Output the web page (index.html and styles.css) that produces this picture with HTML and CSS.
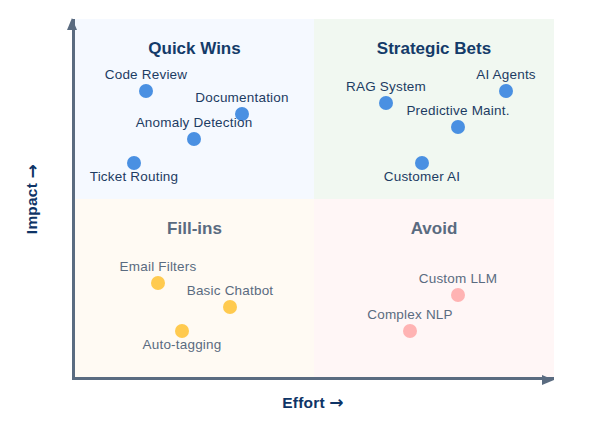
FILE: index.html
```html
<!DOCTYPE html>
<html lang="en">
<head>
<meta charset="utf-8">
<title>Effort / Impact Matrix</title>
<link rel="stylesheet" href="styles.css">
</head>
<body>
<div class="figure">
  <div class="y-label-col"><span class="axis-label y-label">Impact <span class="arrow">→</span></span></div>
  <div class="plot">
    <div class="quadrant q-wins"><h2 class="q-title">Quick Wins</h2></div>
    <div class="quadrant q-bets"><h2 class="q-title">Strategic Bets</h2></div>
    <div class="quadrant q-fill"><h2 class="q-title">Fill-ins</h2></div>
    <div class="quadrant q-avoid"><h2 class="q-title">Avoid</h2></div>

    <div class="point hi above" style="left:71px;top:72px"><span class="label">Code Review</span></div>
    <div class="point hi above" style="left:167px;top:95px"><span class="label">Documentation</span></div>
    <div class="point hi above" style="left:119px;top:120px"><span class="label">Anomaly Detection</span></div>
    <div class="point hi below" style="left:59px;top:144px"><span class="label">Ticket Routing</span></div>

    <div class="point hi above" style="left:311px;top:84px"><span class="label">RAG System</span></div>
    <div class="point hi above" style="left:431px;top:72px"><span class="label">AI Agents</span></div>
    <div class="point hi above" style="left:383px;top:108px"><span class="label">Predictive Maint.</span></div>
    <div class="point hi below" style="left:347px;top:144px"><span class="label">Customer AI</span></div>

    <div class="point fill above" style="left:83px;top:264px"><span class="label">Email Filters</span></div>
    <div class="point fill above" style="left:155px;top:288px"><span class="label">Basic Chatbot</span></div>
    <div class="point fill below" style="left:107px;top:312px"><span class="label">Auto-tagging</span></div>

    <div class="point avoid above" style="left:383px;top:276px"><span class="label">Custom LLM</span></div>
    <div class="point avoid above" style="left:335px;top:312px"><span class="label">Complex NLP</span></div>
  </div>
  <div class="x-label-row"><span class="axis-label">Effort <span class="arrow">→</span></span></div>
</div>
</body>
</html>
```
FILE: styles.css
```css
* { box-sizing: border-box; }

html, body {
  margin: 0;
  padding: 0;
  background: #ffffff;
  font-family: "Liberation Sans", Arial, sans-serif;
}

.figure {
  display: grid;
  grid-template-columns: 72px 482px;
  grid-template-rows: 361px auto;
  padding-top: 19px;
}

.y-label-col {
  display: flex;
  align-items: center;
  justify-content: center;
  padding-right: 8px;
}

.axis-label {
  font-size: 15.5px;
  font-weight: 700;
  color: #0e3466;
  letter-spacing: 0.2px;
  white-space: nowrap;
}

.arrow {
  font-family: "DejaVu Sans", sans-serif;
  font-weight: 700;
  font-size: 17px;
  line-height: 1;
}

.y-label {
  writing-mode: vertical-rl;
  transform: rotate(180deg);
  line-height: 18px;
}

.x-label-row {
  grid-column: 2;
  display: flex;
  justify-content: center;
  padding-top: 14px;
}
.x-label-row .axis-label {
  line-height: 18px;
}

.plot {
  position: relative;
  display: grid;
  grid-template-columns: 239px 240px;
  grid-template-rows: 180px 178px;
  border-left: 3px solid #5a6b80;
  border-bottom: 3px solid #5a6b80;
}

/* arrowheads */
.plot::before {
  content: "";
  position: absolute;
  left: -8px;
  top: -1px;
  border-left: 5.5px solid transparent;
  border-right: 5.5px solid transparent;
  border-bottom: 12px solid #5a6b80;
}
.plot::after {
  content: "";
  position: absolute;
  right: 0;
  bottom: -8px;
  border-top: 5.5px solid transparent;
  border-bottom: 5.5px solid transparent;
  border-left: 12px solid #5a6b80;
}

.quadrant {
  display: flex;
  justify-content: center;
  padding-top: 20px;
}

.q-wins { background: #f5f9ff; }
.q-bets { background: #f1f8f1; }
.q-fill { background: #fffaf3; }
.q-avoid { background: #fff6f6; }

.q-title {
  margin: 0;
  font-size: 17px;
  line-height: 20px;
  font-weight: 700;
  color: #143b69;
}
.q-fill .q-title,
.q-avoid .q-title {
  color: #5a6b80;
}

.point {
  position: absolute;
  width: 0;
  height: 0;
}
.point::before {
  content: "";
  position: absolute;
  left: -7px;
  top: -7px;
  width: 14px;
  height: 14px;
  border-radius: 50%;
}
.point.hi::before { background: #4a90e2; }
.point.fill::before { background: #ffca4f; }
.point.avoid::before { background: #ffb3b3; }

.label {
  position: absolute;
  left: 0;
  transform: translateX(-50%);
  white-space: nowrap;
  font-size: 13.5px;
  line-height: 16px;
  letter-spacing: 0.2px;
  color: #1d3c63;
}
.point.fill .label,
.point.avoid .label {
  color: #5a6b80;
}
.above .label { top: -24px; }
.below .label { top: 6px; }
```
